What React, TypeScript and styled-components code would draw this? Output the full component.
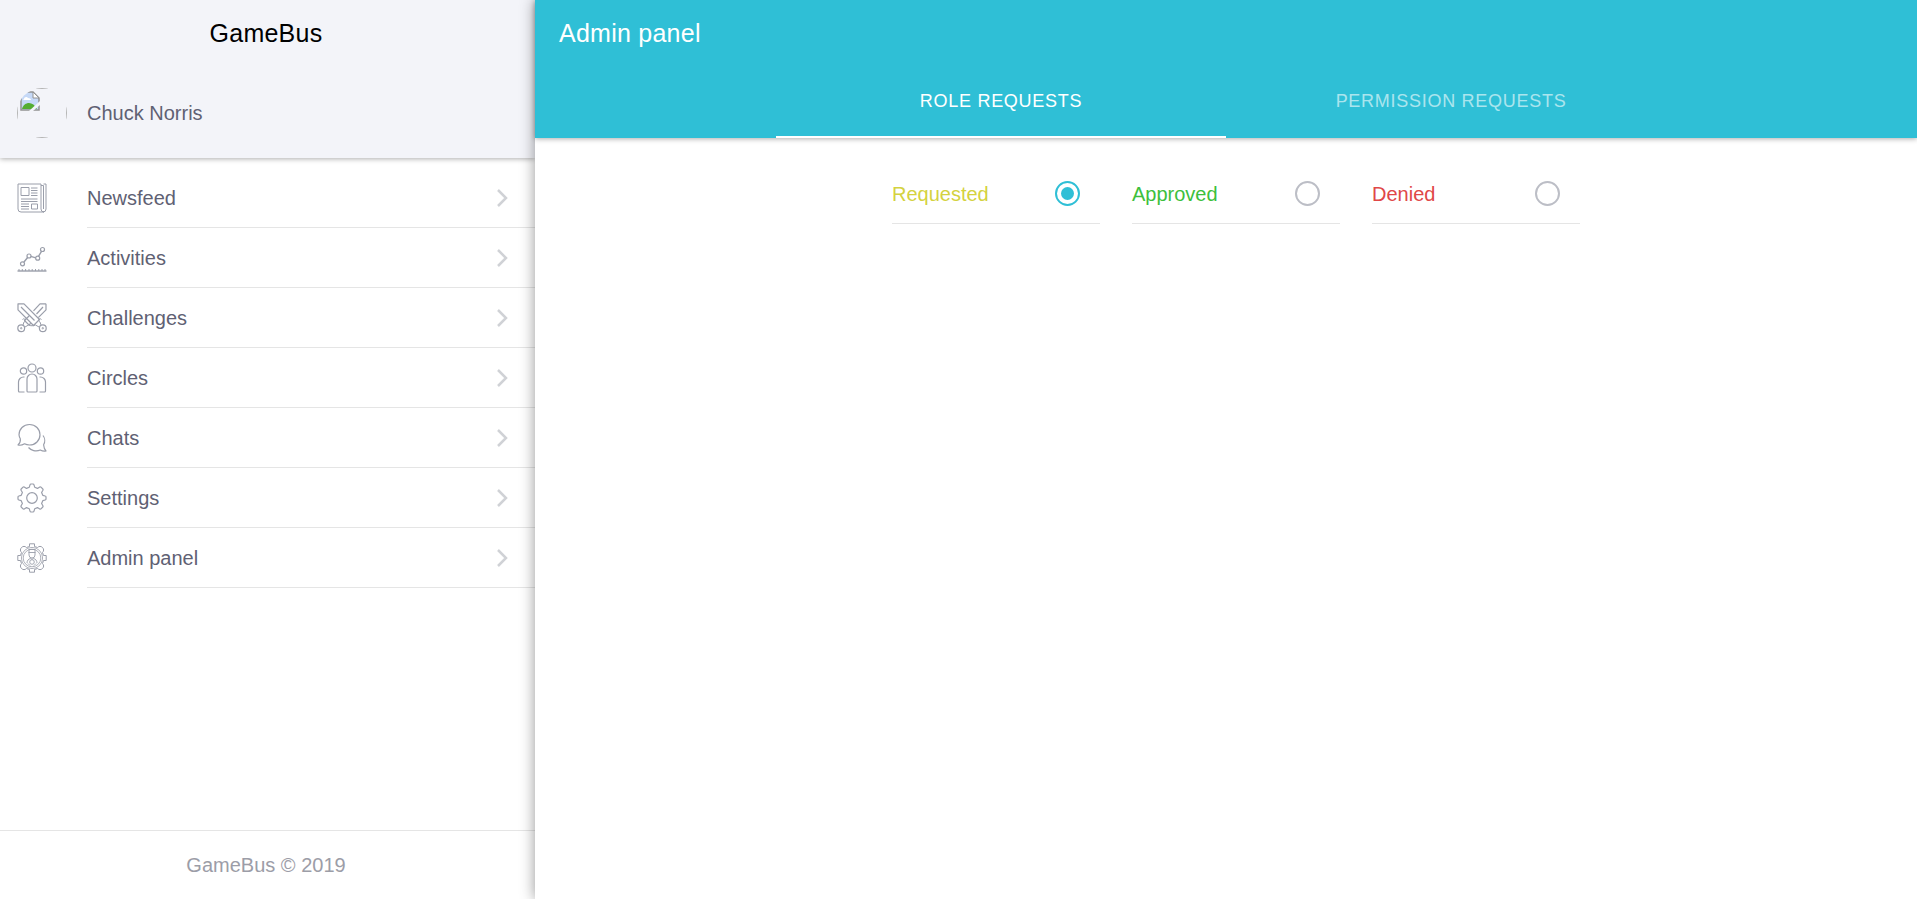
import React, { useState } from "react";
import styled, { createGlobalStyle } from "styled-components";

const teal = "#2fbfd6";
const line = "#e5e5e5";

const GlobalStyle = createGlobalStyle`
  * { box-sizing: border-box; }
  body {
    margin: 0;
    background: #fff;
    font-family: "Liberation Sans", Arial, sans-serif;
    font-size: 20px;
    line-height: 24px;
  }
`;

const Shell = styled.div`
  display: flex;
  min-height: 100vh;
`;

const Sidebar = styled.aside`
  flex: 0 0 28%;
  max-width: 535px;
  display: flex;
  flex-direction: column;
`;

const SidebarHeader = styled.header`
  background: #f3f4f9;
  box-shadow: 0 1px 5px rgba(0, 0, 0, 0.32);
`;

const Brand = styled.h2`
  margin: 0;
  height: 66px;
  padding-right: 3px;
  display: flex;
  align-items: center;
  justify-content: center;
  font-size: 25px;
  font-weight: 400;
  letter-spacing: 0.01em;
  color: #000;
`;

const Profile = styled.div`
  display: flex;
  align-items: center;
  gap: 20px;
  height: 92px;
  padding: 2px 0 0 17px;
  color: #5f6173;
`;

const Avatar = styled.span`
  width: 50px;
  height: 50px;
  border-radius: 50%;
  overflow: hidden;
`;

const BrokenImage = styled.span`
  display: block;
  height: 100%;
  padding: 2px;
  border: 1px solid #b4b4b4;
  svg { display: block; }
`;

const Nav = styled.nav`
  flex: 1;
  padding-top: 10px;
`;

const NavItem = styled.a`
  display: flex;
  align-items: stretch;
  height: 60px;
  padding-left: 17px;
  gap: 40px;
  color: #5f6173;
  text-decoration: none;
`;

const NavIcon = styled.svg`
  width: 30px;
  height: 30px;
  align-self: center;
  fill: none;
  stroke: #9a9eaa;
  stroke-linejoin: round;
`;

const NavLabel = styled.span`
  flex: 1;
  display: flex;
  align-items: center;
  justify-content: space-between;
  padding-right: 27px;
  border-bottom: 1px solid ${line};
`;

const Chevron = styled.svg`
  width: 12px;
  height: 18px;
  fill: none;
  stroke: #d0d2d6;
  stroke-width: 2.5;
`;

const Footer = styled.footer`
  height: 69px;
  padding-right: 3px;
  display: flex;
  align-items: center;
  justify-content: center;
  border-top: 1px solid ${line};
  color: #9c9da7;
`;

const Main = styled.main`
  flex: 1;
  position: relative;
  background: #fff;
  box-shadow: 0 0 14px rgba(0, 0, 0, 0.42);
`;

const MainHeader = styled.header`
  background: ${teal};
  box-shadow: 0 1px 5px rgba(0, 0, 0, 0.32);
  color: #fff;
`;

const PageTitle = styled.h1`
  margin: 0;
  height: 66px;
  padding-left: 24px;
  display: flex;
  align-items: center;
  font-size: 25px;
  font-weight: 400;
  letter-spacing: 0.01em;
`;

const Tabs = styled.div`
  display: flex;
  max-width: 900px;
  height: 72px;
  margin: 0 auto;
`;

const Tab = styled.button<{ $active: boolean }>`
  flex: 1;
  padding: 0;
  border: 0;
  border-bottom: 2px solid ${(p) => (p.$active ? "#fff" : "transparent")};
  background: none;
  color: ${(p) => (p.$active ? "#fff" : "rgba(255, 255, 255, 0.6)")};
  font: inherit;
  font-size: 18px;
  letter-spacing: 0.04em;
  text-transform: uppercase;
  cursor: pointer;
`;

const Filters = styled.div`
  display: flex;
  justify-content: center;
  gap: 32px;
  padding: 26px 0 0 20px;
`;

const Filter = styled.label<{ $color: string }>`
  width: 208px;
  height: 60px;
  display: flex;
  align-items: center;
  justify-content: space-between;
  padding-right: 20px;
  border-bottom: 1px solid ${line};
  color: ${(p) => p.$color};
  cursor: pointer;
`;

const Radio = styled.input`
  appearance: none;
  width: 25px;
  height: 25px;
  margin: 0;
  border: 2px solid #bcbec6;
  border-radius: 50%;
  &:checked {
    display: flex;
    align-items: center;
    justify-content: center;
    border-color: ${teal};
  }
  &:checked::before {
    content: "";
    width: 13px;
    height: 13px;
    border-radius: 50%;
    background: ${teal};
  }
`;

const icons: Record<string, React.ReactNode> = {
  Newsfeed: (
    <>
      <path d="M1 1h23v25a3 3 0 0 0 3 3H4a3 3 0 0 1-3-3zM24 2.500h2.500V26M26.500 1H29v25a3 3 0 0 1-3 3" />
      <path d="M4 4.500h8v8H4zM14 5h6.500M14 7.500h6.500M14 10h6.500M14 12.500h6.500M4 16h16.500M4 18.500h16.500M4 21h8M4 23.500h8M4 26h8M14.500 21h6v5h-6z" />
    </>
  ),
  Activities: (
    <>
      <path d="M6.800 19.300l4-5M13.800 13.300l5 1.500M21.500 13.300l3-5" strokeWidth="1.400" />
      <circle cx="5.500" cy="20.800" r="2" strokeWidth="1.200" />
      <circle cx="12" cy="13" r="2" strokeWidth="1.200" />
      <circle cx="20.700" cy="15.200" r="2" strokeWidth="1.200" />
      <circle cx="25.500" cy="6.500" r="2" strokeWidth="1.200" />
      <path d="M.5 28h29" strokeWidth="1.400" />
      <path d="M2 28v-2M5.300 28v-2M8.600 28v-2M12 28v-2M15.200 28v-2M18.500 28v-2M21.800 28v-2M25 28v-2M28 28v-2" />
    </>
  ),
  Challenges: (
    <>
      <path d="M1 .8h6L22.500 16.500l-6 6L1 6.800zM4 4l13.500 13.500M29 .8h-6l-6.500 7M29 .8v6l-7.500 7.500M26 4l-6.500 7M13.500 20.500l-1.500 1.500-4.500-4.500 1.500-1.500M12 13l-3.500 3.500" strokeWidth="1.200" />
      <path d="M5.500 16.500c1-1 2-1 2.500 0s0 2-1 2.500L6 22M8 24l3.500-2c2 1 5 1 7 0l3.500 2M24.500 16.500c-1-1-2-1-2.500 0s0 2 1 2.500l1 3" />
      <circle cx="4.200" cy="25.200" r="3.400" strokeWidth="1.200" />
      <circle cx="25.800" cy="25.200" r="3.400" strokeWidth="1.200" />
      <circle cx="4.200" cy="25.200" r=".7" />
      <circle cx="25.800" cy="25.200" r=".7" />
    </>
  ),
  Circles: (
    <g strokeWidth="1.200">
      <circle cx="15" cy="5" r="4" /><circle cx="6.500" cy="8" r="3.200" /><circle cx="23.500" cy="8" r="3.200" />
      <path d="M10 28V16a5 5 0 0 1 10 0v12a1 1 0 0 1-1 1h-8a1 1 0 0 1-1-1zM7.500 29H2.500a1 1 0 0 1-1-1v-9a5 5 0 0 1 5-5h1M22.500 29h5a1 1 0 0 0 1-1v-9a5 5 0 0 0-5-5h-1" />
    </g>
  ),
  Chats: (
    <g strokeWidth="1.200">
      <path d="M12.500 1.500c6 0 10.500 4.500 10.500 10.200S18.500 22 12.500 22c-2 0-3.500-.4-5-1.200C5.500 22 3 22.500 1 22c2-2 2.700-4 2.300-6.200A10 10 0 0 1 2 11.700C2 6 6.500 1.500 12.500 1.500z" />
      <path d="M26 12.500c2 2.500 2.300 6.500.6 9.300.2 2.500.9 4.700 2.400 6.200-2 .4-4 0-5.700-1-4.300 1.800-9.300.5-11.800-2.500" />
    </g>
  ),
  Settings: (
    <g strokeWidth="1.200">
      <path d="M12.300 4.200L13 1.800q.2-.8 1-.8h2q.8 0 1 .8l.7 2.400 2.800 1.200 2.200-1.300q.8-.4 1.300.1l1.800 1.800q.5.500.1 1.300L24.600 9.500l1.200 2.800 2.400.7q.8.200.8 1v2q0 .8-.8 1l-2.400.7-1.200 2.800 1.300 2.200q.4.800-.1 1.300L24 25.800q-.5.500-1.300.1l-2.200-1.300-2.800 1.200-.7 2.400q-.2.800-1 .8h-2q-.8 0-1-.8l-.7-2.400-2.800-1.200-2.200 1.300q-.8.400-1.300-.1L4.200 24q-.5-.5-.1-1.300l1.300-2.200-1.200-2.800L1.800 17q-.8-.2-.8-1v-2q0-.8.800-1l2.400-.7 1.200-2.800L4.100 7.300Q3.700 6.500 4.200 6L6 4.200q.5-.5 1.300-.1l2.200 1.300z" />
      <circle cx="15" cy="15" r="5.300" />
    </g>
  ),
  "Admin panel": (
    <>
      <path d="M12.500 3.500V.8h5v2.700l3 1C22 3 24 3 25.500 4.500S27 8 25.500 9.500l1 3h2.700v5h-2.700l-1 3c1.500 1.500 1.500 3.500 0 5s-3.500 1.500-5 0l-3 1v2.700h-5v-2.700l-3-1c-1.500 1.500-3.500 1.500-5 0s-1.500-3.500 0-5l-1-3H.8v-5h2.700l1-3C3 8 3 6 4.500 4.500s3.500-1.500 5 0z" />
      <circle cx="15" cy="15" r="10.600" strokeWidth=".8" />
      <circle cx="15" cy="15" r="8.800" strokeWidth=".8" />
      <path d="M11.500 6.500h7M12 7v5a3 3 0 0 0 6 0V7M11.500 9.500h7M13.500 15l1.500 1.500 1.500-1.500M10 20c0-2.500 1.500-4 3.500-4.500M20 20c0-2.500-1.500-4-3.500-4.500" strokeWidth=".9" />
      <circle cx="15" cy="19" r="2.300" strokeWidth=".9" />
      <path d="M11 20.500l2 2M19 20.500l-2 2" strokeWidth=".9" />
    </>
  ),
};

const filters = [
  { label: "Requested", color: "#d4d23f" },
  { label: "Approved", color: "#3dbf3d" },
  { label: "Denied", color: "#e04747" },
];

const tabs = ["Role requests", "Permission requests"];

export default function App() {
  const [tab, setTab] = useState(tabs[0]);
  const [status, setStatus] = useState("Requested");

  return (
    <>
      <GlobalStyle />
      <Shell>
        <Sidebar>
          <SidebarHeader>
            <Brand>GameBus</Brand>
            <Profile>
              <Avatar>
                <BrokenImage>
                  <svg width="20" height="20" viewBox="0 0 20 20">
                    <path d="M1 1h12l6 6v12H1z" fill="#c6d9f7" stroke="#929292" strokeWidth="1.500" />
                    <path d="M4 8c0-2 3-3 4-1 2 0 3 1 3 2H3z" fill="#fff" />
                    <path d="M2 18c1-4 4-6 7-6s6 2 8 6z" fill="#54ad32" />
                    <path d="M13 1v6h6z" fill="#fff" stroke="#929292" />
                    <path d="M9 20L20 10v4l-7 6z" fill="#f3f4f9" />
                  </svg>
                </BrokenImage>
              </Avatar>
              Chuck Norris
            </Profile>
          </SidebarHeader>
          <Nav>
            {Object.entries(icons).map(([label, drawing]) => (
              <NavItem href="#" key={label}>
                <NavIcon viewBox="0 0 30 30" aria-hidden="true">{drawing}</NavIcon>
                <NavLabel>
                  {label}
                  <Chevron viewBox="0 0 12 18" aria-hidden="true">
                    <path d="M2 1l8 8-8 8" />
                  </Chevron>
                </NavLabel>
              </NavItem>
            ))}
          </Nav>
          <Footer>GameBus © 2019</Footer>
        </Sidebar>
        <Main>
          <MainHeader>
            <PageTitle>Admin panel</PageTitle>
            <Tabs role="tablist">
              {tabs.map((name) => (
                <Tab
                  key={name}
                  role="tab"
                  aria-selected={tab === name}
                  $active={tab === name}
                  onClick={() => setTab(name)}
                >
                  {name}
                </Tab>
              ))}
            </Tabs>
          </MainHeader>
          <Filters role="radiogroup" aria-label="Request status">
            {filters.map(({ label, color }) => (
              <Filter key={label} $color={color}>
                {label}
                <Radio
                  type="radio"
                  name="status"
                  checked={status === label}
                  onChange={() => setStatus(label)}
                />
              </Filter>
            ))}
          </Filters>
        </Main>
      </Shell>
    </>
  );
}
